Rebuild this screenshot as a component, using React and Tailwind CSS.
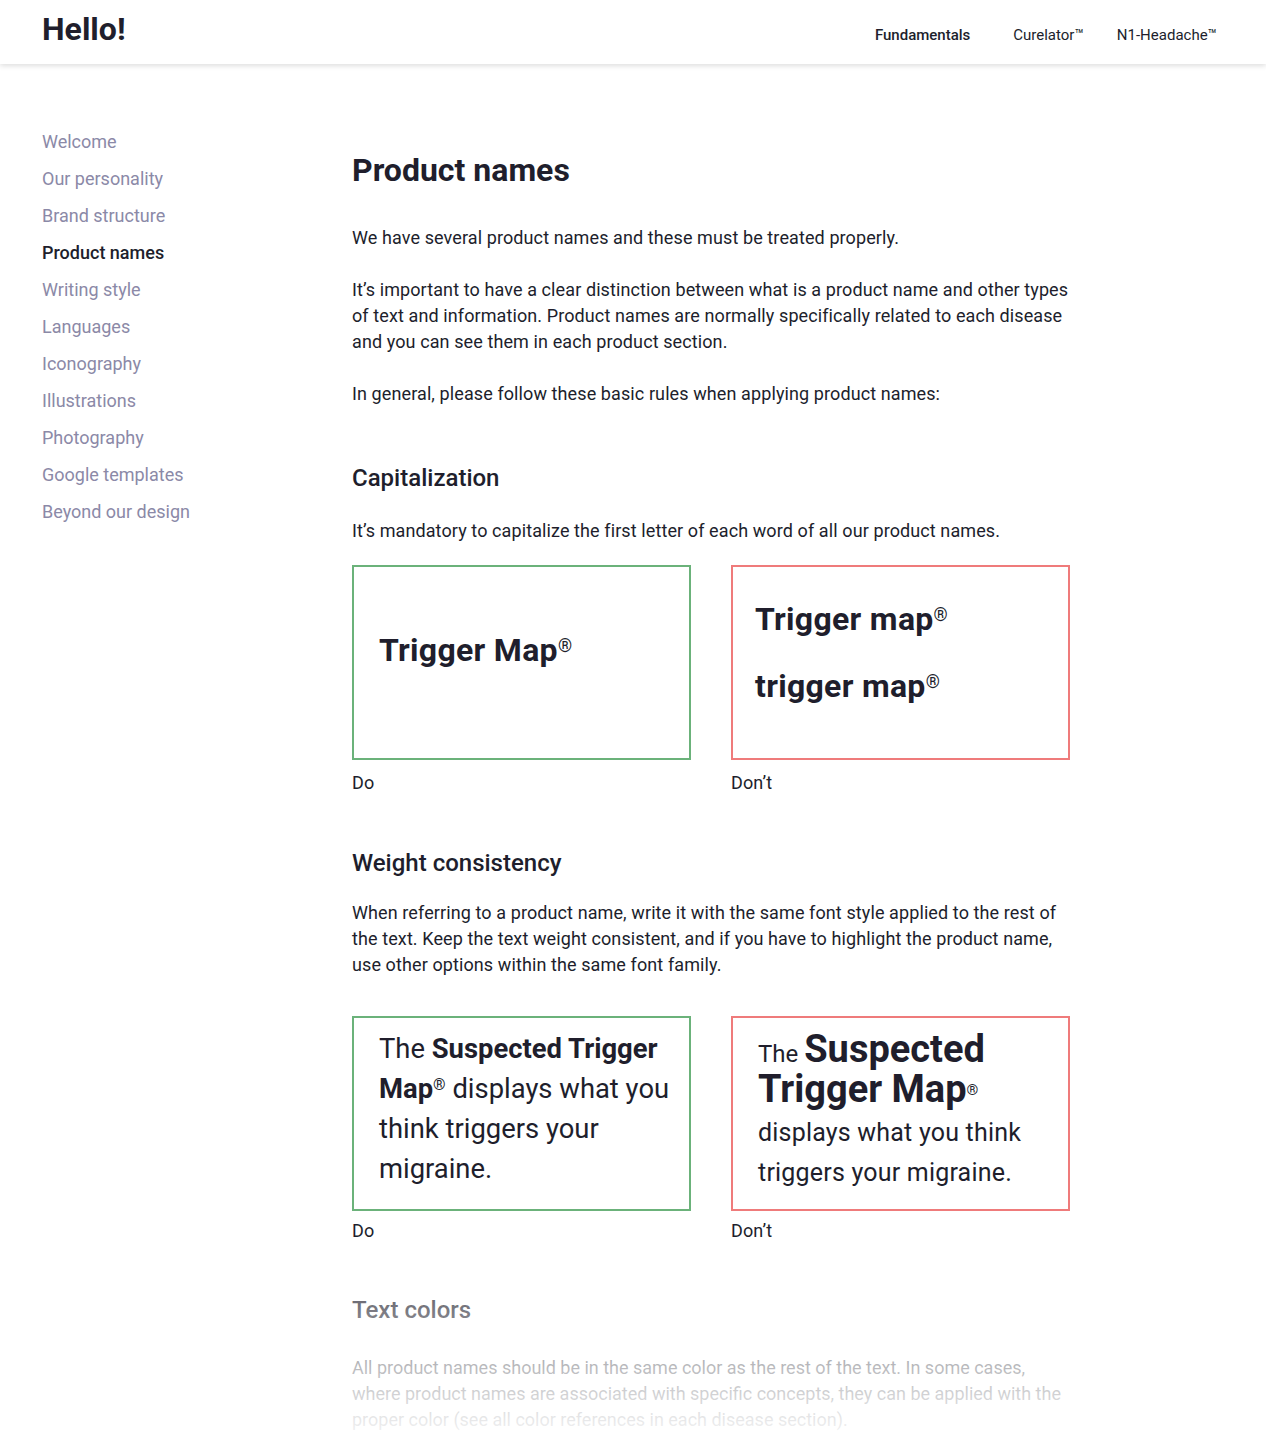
import React from "react";

const nav = [
  "Welcome",
  "Our personality",
  "Brand structure",
  "Product names",
  "Writing style",
  "Languages",
  "Iconography",
  "Illustrations",
  "Photography",
  "Google templates",
  "Beyond our design",
];

export default function App() {
  return (
    <div
      className="relative h-[1456px] overflow-hidden bg-white text-[#201e2c]"
      style={{ fontFamily: "Roboto, 'Liberation Sans', sans-serif" }}
    >
      <header className="relative z-10 flex h-[64px] justify-between bg-white pl-[42px] pr-[49px] shadow-[0_2px_5px_rgba(0,0,0,0.13)]">
        <div className="pt-[10px] text-[32px] font-bold leading-[38px]">Hello!</div>
        <nav className="flex gap-[43px] pt-[25px] text-[15px] leading-[20px]">
          <span className="font-medium">Fundamentals</span>
          <span className="flex gap-[33px]">
            <span>Curelator™</span>
            <span>N1-Headache™</span>
          </span>
        </nav>
      </header>

      <div className="flex pl-[42px] pt-[59px]">
        <aside className="w-[310px] shrink-0">
          <ul className="flex flex-col">
            {nav.map((n) => (
              <li
                key={n}
                className={
                  n === "Product names"
                    ? "text-[18px] font-medium leading-[37px] text-[#201e2c]"
                    : "text-[18px] leading-[37px] text-[#8b89a7]"
                }
              >
                {n}
              </li>
            ))}
          </ul>
        </aside>

        <main className="w-[718px] pt-[29px] text-[18px] leading-[26px] tracking-[0.1px]">
          <h1 className="text-[32px] font-bold leading-[36px] tracking-normal">Product names</h1>
          <p className="mt-[37px]">We have several product names and these must be treated properly.</p>
          <p className="mt-[26px]">
            It’s important to have a clear distinction between what is a product name and other types of text and
            information. Product names are normally specifically related to each disease and you can see them in each
            product section.
          </p>
          <p className="mt-[26px]">In general, please follow these basic rules when applying product names:</p>

          <h2 className="mt-[56px] text-[24px] font-medium leading-[30px] tracking-normal">Capitalization</h2>
          <p className="mt-[25px]">
            It’s mandatory to capitalize the first letter of each word of all our product names.
          </p>

          <div className="mt-[21px] grid grid-cols-2 gap-[40px]">
            <div>
              <div className="h-[195px] border-2 border-[#6bb27a] pl-[25px] pt-[63px]">
                <div className="text-[32px] font-bold leading-[40px] tracking-[0.3px]">
                  Trigger Map<sup className="text-[18px] font-normal leading-none">®</sup>
                </div>
              </div>
              <div className="mt-[10px]">Do</div>
            </div>
            <div>
              <div className="h-[195px] border-2 border-[#ef7b7b] pl-[22px] pt-[32px]">
                <div className="text-[32px] font-bold leading-[40px] tracking-[0.3px]">
                  Trigger map<sup className="text-[18px] font-normal leading-none">®</sup>
                </div>
                <div className="mt-[27px] text-[32px] font-bold leading-[40px] tracking-[0.3px]">
                  trigger map<sup className="text-[18px] font-normal leading-none">®</sup>
                </div>
              </div>
              <div className="mt-[10px]">Don’t</div>
            </div>
          </div>

          <h2 className="mt-[52px] text-[24px] font-medium leading-[30px] tracking-normal">Weight consistency</h2>
          <p className="mt-[22px]">
            When referring to a product name, write it with the same font style applied to the rest of the text. Keep
            the text weight consistent, and if you have to highlight the product name, use other options within the same
            font family.
          </p>

          <div className="mt-[38px] grid grid-cols-2 gap-[40px] tracking-normal">
            <div>
              <div className="h-[195px] border-2 border-[#6bb27a] pl-[25px] pr-[8px] pt-[11px]">
                <p className="text-[27.4px] leading-[40px]">
                  The <b className="font-bold">Suspected Trigger Map</b>
                  <sup className="text-[16px] leading-none">®</sup> displays what you think triggers your migraine.
                </p>
              </div>
              <div className="mt-[7px] tracking-[0.1px]">Do</div>
            </div>
            <div>
              <div className="h-[195px] border-2 border-[#ef7b7b] pl-[25px] pr-[10px] pt-[11px]">
                <div className="text-[38px] font-bold leading-[40px]">
                  <span className="text-[24px] font-normal leading-none">The </span>
                  Suspected Trigger Map
                  <sup className="text-[15px] font-normal leading-none">®</sup>
                </div>
                <p className="mt-[4px] w-[290px] text-[25px] leading-[40px] tracking-[0.2px]">
                  displays what you think triggers your migraine.
                </p>
              </div>
              <div className="mt-[7px] tracking-[0.1px]">Don’t</div>
            </div>
          </div>

          <h2 className="mt-[51px] text-[24px] font-medium leading-[30px] tracking-normal">Text colors</h2>
          <p className="mt-[30px] tracking-normal">
            All product names should be in the same color as the rest of the text. In some cases, where product names
            are associated with specific concepts, they can be applied with the proper color (see all color references
            in each disease section).
          </p>
        </main>
      </div>

      <div className="pointer-events-none absolute bottom-0 left-0 right-0 h-[216px] bg-[linear-gradient(to_bottom,rgba(255,255,255,0)_0%,rgba(255,255,255,0.4)_32%,rgba(255,255,255,0.7)_60%,rgba(255,255,255,0.9)_84%,#fff_100%)]" />
    </div>
  );
}
